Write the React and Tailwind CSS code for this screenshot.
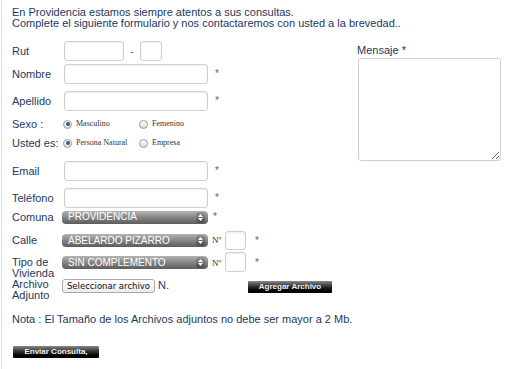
import React from "react";

const SANS = { fontFamily: '"Liberation Sans", Arial, sans-serif' };
const SERIF = { fontFamily: '"Liberation Serif", "Times New Roman", serif' };

function TextInput({ w, h = 20 }) {
  return (
    <div
      className="shrink-0 rounded-[3px] border border-[#cfcfcf] bg-white shadow-[inset_0_1px_2px_rgba(0,0,0,0.08)]"
      style={{ width: w, height: h }}
    />
  );
}

function Star({ className = "" }) {
  return <span className={"text-[10px] leading-none text-[#666] " + className}>*</span>;
}

function Radio({ checked }) {
  return (
    <span className="flex h-[9px] w-[9px] shrink-0 items-center justify-center rounded-full border border-[#9a9a9a] bg-gradient-to-b from-[#ffffff] to-[#dcdcdc]">
      {checked && <span className="h-[4px] w-[4px] rounded-full bg-[#2e5e9e]" />}
    </span>
  );
}

function Select({ value }) {
  return (
    <div className="flex h-[13px] w-[146px] shrink-0 items-center justify-between rounded-[4px] bg-gradient-to-b from-[#b4b4b4] via-[#858585] to-[#5c5c5c] pl-[6px] pr-[3px]">
      <span className="text-[10px] leading-none text-white" style={SANS}>
        {value}
      </span>
      <span className="flex h-[11px] w-[9px] flex-col items-center justify-center gap-[1px] rounded-[3px] bg-gradient-to-b from-[#959595] to-[#4a4a4a]">
        <svg width="5" height="3" viewBox="0 0 5 3"><path d="M0 3 L2.5 0 L5 3 Z" fill="#fff" /></svg>
        <svg width="5" height="3" viewBox="0 0 5 3"><path d="M0 0 L2.5 3 L5 0 Z" fill="#fff" /></svg>
      </span>
    </div>
  );
}

function BlackButton({ label, w }) {
  return (
    <div
      className="flex h-[12px] shrink-0 items-center justify-center rounded-[1px] bg-gradient-to-b from-[#8a8a8a] via-[#2a2a2a] to-[#000] text-[8px] font-bold leading-none text-[#f2f2f2] [text-shadow:0_1px_1px_rgba(0,0,0,0.8)]"
      style={{ width: w, ...SANS }}
    >
      {label}
    </div>
  );
}

export default function App() {
  const label = "text-[11px] leading-none text-[#1d3860]";
  return (
    <div
      className="ml-px h-[369px] w-[516px] overflow-hidden border-l border-[#dedede] bg-white pl-[10px] pt-[7px]"
      style={SANS}
    >
      <div className="text-[11px] leading-[11px] text-[#1d3860]">
        <div>En Providencia estamos siempre atentos a sus consultas.</div>
        <div>Complete el siguiente formulario y nos contactaremos con usted a la brevedad..</div>
      </div>

      <div className="flex">
        {/* Left column */}
        <div className="w-[345px] shrink-0">
          {/* Rut */}
          <div className="mt-[12px] flex h-[20px] items-center">
            <span className={label + " w-[52px]"}>Rut</span>
            <TextInput w={60} />
            <span className="w-[16px] text-center text-[11px] text-[#666]">-</span>
            <TextInput w={22} />
          </div>
          {/* Nombre */}
          <div className="mt-[3px] flex h-[20px] items-center">
            <span className={label + " w-[52px]"}>Nombre</span>
            <TextInput w={144} />
            <Star className="ml-[7px]" />
          </div>
          {/* Apellido */}
          <div className="mt-[7px] flex h-[20px] items-center">
            <span className={label + " w-[52px]"}>Apellido</span>
            <TextInput w={144} />
            <Star className="ml-[7px]" />
          </div>
          {/* Sexo */}
          <div className="mt-[5px] flex h-[16px] items-center">
            <span className={label + " w-[51px]"}>Sexo :</span>
            <div className="flex w-[76px] items-center gap-[4px]">
              <Radio checked />
              <span className="text-[8px] leading-none text-[#333]" style={SERIF}>Masculino</span>
            </div>
            <div className="flex items-center gap-[4px]">
              <Radio />
              <span className="text-[8px] leading-none text-[#333]" style={SERIF}>Femenino</span>
            </div>
          </div>
          {/* Usted es */}
          <div className="mt-[3px] flex h-[16px] items-center">
            <span className={label + " w-[51px] whitespace-nowrap"}>Usted es:</span>
            <div className="flex w-[76px] items-center gap-[4px]">
              <Radio checked />
              <span className="text-[8px] leading-none text-[#333]" style={SERIF}>Persona Natural</span>
            </div>
            <div className="flex items-center gap-[4px]">
              <Radio />
              <span className="text-[8px] leading-none text-[#333]" style={SERIF}>Empresa</span>
            </div>
          </div>
          {/* Email */}
          <div className="mt-[10px] flex h-[20px] items-center">
            <span className={label + " w-[52px]"}>Email</span>
            <TextInput w={144} />
            <Star className="ml-[7px]" />
          </div>
          {/* Telefono */}
          <div className="mt-[7px] flex h-[20px] items-center">
            <span className={label + " w-[52px]"}>Teléfono</span>
            <TextInput w={144} />
            <Star className="ml-[7px]" />
          </div>
          {/* Comuna */}
          <div className="mt-[2px] flex h-[14px] items-center">
            <span className={label + " w-[50px]"}>Comuna</span>
            <Select value="PROVIDENCIA" />
            <Star className="ml-[5px]" />
          </div>
          {/* Calle */}
          <div className="mt-[7px] flex h-[19px] items-center">
            <span className={label + " w-[50px]"}>Calle</span>
            <Select value="ABELARDO PIZARRO" />
            <span className="ml-[4px] w-[13px] text-[9px] leading-none text-[#333]" style={SERIF}>Nº</span>
            <TextInput w={21} h={19} />
            <Star className="ml-[9px]" />
          </div>
          {/* Tipo de Vivienda */}
          <div className="mt-[2px] flex h-[20px] items-start">
            <span className={label + " mt-[5px] w-[50px] leading-[10px]"}>
              Tipo de
              <br />
              Vivienda
            </span>
            <div className="mt-[4px]">
              <Select value="SIN COMPLEMENTO" />
            </div>
            <span className="ml-[4px] mt-[7px] w-[13px] text-[9px] leading-none text-[#333]" style={SERIF}>Nº</span>
            <TextInput w={21} h={20} />
            <Star className="ml-[9px] mt-[6px]" />
          </div>
          {/* Archivo Adjunto */}
          <div className="mt-[7px] flex h-[20px] items-start">
            <span className={label + " w-[50px] leading-[10px]"}>
              Archivo
              <br />
              Adjunto
            </span>
            <div
              className="flex h-[14px] w-[93px] items-center justify-center rounded-[3px] border border-[#a9a9a9] bg-gradient-to-b from-[#ffffff] to-[#ececec] leading-none text-[#111]"
              style={{ fontFamily: '"DejaVu Sans", sans-serif', fontSize: "8.5px" }}
            >
              Seleccionar archivo
            </div>
            <span className={label + " ml-[3px] mt-[1px]"}>N.</span>
            <div className="ml-[79px] mt-[2px]">
              <BlackButton label="Agregar Archivo" w={84} />
            </div>
          </div>
          {/* Nota */}
          <div className={label + " mt-[15px] leading-[13px]"}>
            Nota : El Tamaño de los Archivos adjuntos no debe ser mayor a 2 Mb.
          </div>
          {/* Enviar */}
          <div className="ml-[1px] mt-[21px]">
            <BlackButton label="Enviar Consulta," w={86} />
          </div>
        </div>

        {/* Right column */}
        <div className="flex flex-col">
          <span className={label + " mt-[16px] leading-[12px]"}>Mensaje *</span>
          <textarea className="ml-[1px] mt-[2px] h-[103px] w-[143px] rounded-[3px] border border-[#cfcfcf] bg-white outline-none" />
        </div>
      </div>
    </div>
  );
}
